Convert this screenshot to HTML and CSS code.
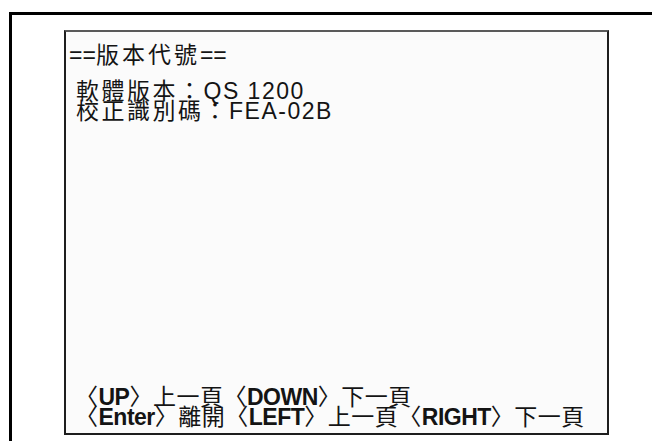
FILE: index.html
```html
<!DOCTYPE html>
<html lang="zh-Hant">
<head>
    <meta charset="UTF-8">
    <meta name="viewport" content="width=device-width, initial-scale=1.0">
    <title>版本代號</title>
    <link rel="stylesheet" href="styles.css">
</head>
<body>

    <!-- Outer frame -->
    <div class="frame">

        <!-- LCD screen -->
        <div class="screen">
            <div class="title">==<span class="cjk">版本代號</span>==</div>

            <div class="info">
                <div class="line"><span class="cjk">軟體版本：</span>QS 1200</div>
                <div class="line"><span class="cjk">校正識別碼：</span>FEA-02B</div>
            </div>

            <!-- Key hints -->
            <div class="keys">
                <div class="line">〈<b>UP</b>〉上一頁〈<b>DOWN</b>〉下一頁</div>
                <div class="line">〈<b>Enter</b>〉離開〈<b>LEFT</b>〉上一頁〈<b>RIGHT</b>〉下一頁</div>
            </div>
        </div>

    </div>

</body>
</html>
```

FILE: styles.css
```css
body {
    margin: 0;
    background: #ffffff;
    font-family: "Liberation Sans", "Noto Sans CJK TC", sans-serif;
    color: #141414;
}
.frame {
    margin: 12px 0 0 9px;
    height: 429px;
    border-top: 3px solid #000000;
    border-left: 3px solid #000000;
    padding: 15px 43px 0 52px;
    box-sizing: border-box;
}
.screen {
    height: 405px;
    box-sizing: border-box;
    border: 2px solid #1e1e1e;
    border-top-color: #5a5a5a;
    background: #fbfbfb;
    display: flex;
    flex-direction: column;
    padding: 12px 0 6px 3px;
}
.title {
    font-size: 23px;
    line-height: 22px;
    white-space: nowrap;
}
.title .cjk {
    letter-spacing: 3px;
}
.info {
    margin-top: 15px;
    padding-left: 7px;
}
.info .line {
    font-size: 23px;
    line-height: 20px;
    letter-spacing: 1.5px;
    white-space: nowrap;
}
.info .cjk {
    letter-spacing: 2.5px;
}
.keys {
    margin-top: auto;
    padding-left: 6px;
}
.keys .line {
    font-size: 23px;
    line-height: 20px;
    letter-spacing: 0.5px;
    white-space: nowrap;
}
.keys b {
    font-weight: bold;
    letter-spacing: -0.5px;
}
```
